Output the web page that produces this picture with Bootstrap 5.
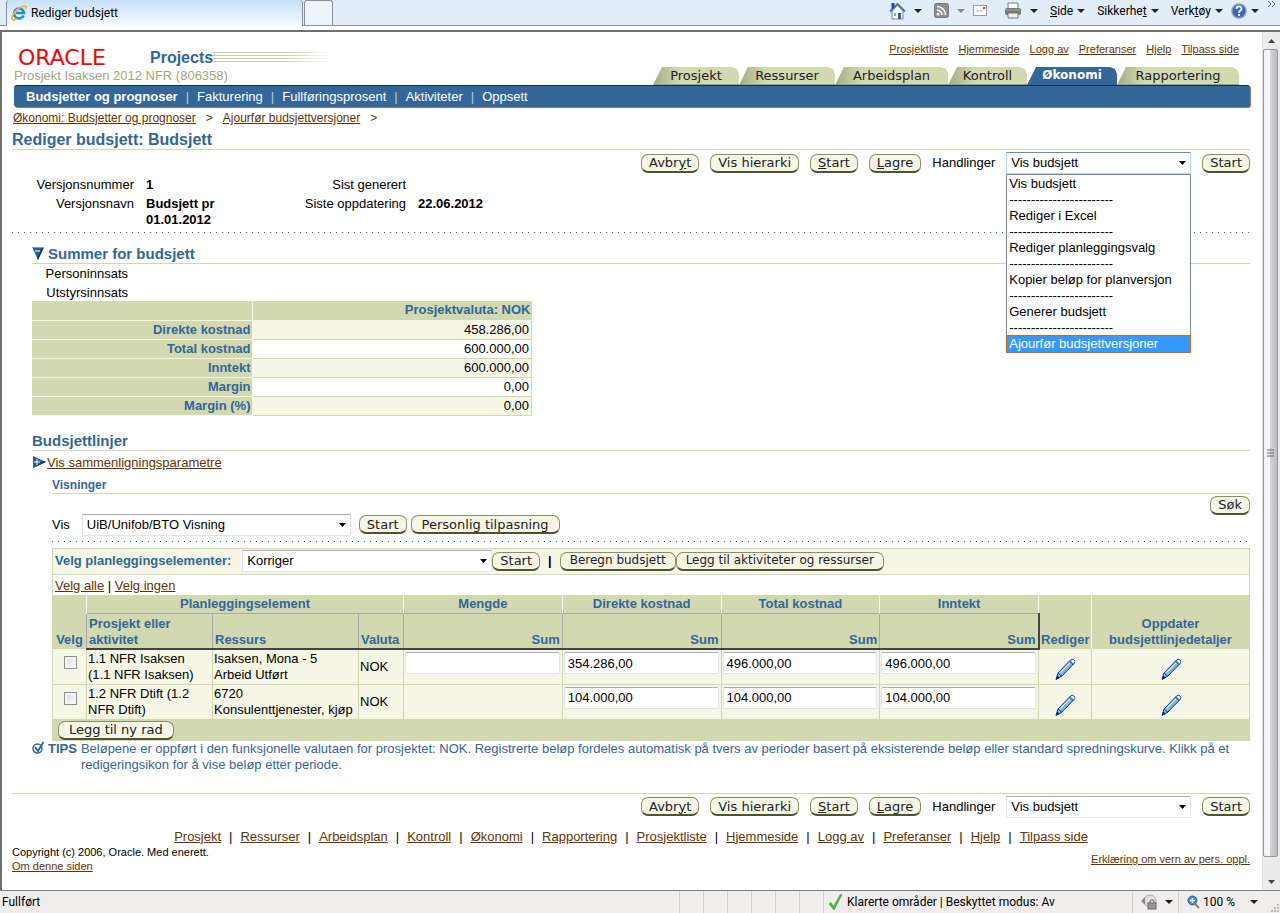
<!DOCTYPE html>
<html lang="no">
<head>
<meta charset="utf-8">
<meta name="viewport" content="width=device-width, initial-scale=1">
<title>Rediger budsjett</title>
<link href="https://cdn.jsdelivr.net/npm/bootstrap@5.3.0/dist/css/bootstrap.min.css" rel="stylesheet">
<style>
:root{--navy:#336699;--khaki:#d2d8b0;--cream:#f5f6e6;--brown:#663300}
body{font:13px/16px "Liberation Sans",Arial,sans-serif;color:#000;background:#fff;min-height:100vh}
a{color:var(--brown);text-decoration:underline}
a:hover{color:#000}
svg{display:block;flex:none}
.chrome{font:12px/16px Roboto,"Open Sans",sans-serif}
/* browser bar */
.topbar{height:26px;background:#e2edfa;border-bottom:1px solid #868f9b}
.pagetab{width:297px;height:26px;margin-left:6px;padding:0 0 0 4px;border:1px solid #868f9b;border-width:0 1px;border-radius:3px 3px 0 0;background:linear-gradient(#c8e0fb,#f6faff)}
.newtab{width:29px;height:25px;margin-left:1px;border:1px solid #868f9b;border-bottom:0;border-radius:3px 3px 0 0;background:#eef4fc}
.tools a{color:#000;text-decoration:none}
.caret{width:0;height:0;border:4px solid transparent;border-top:4px solid #222;border-bottom:0;flex:none}
.caret.dim{border-top-color:#888}
.view{margin-top:4px;border-top:2px solid #707070;border-left:2px solid #707070}
.page{padding:0 12px 0 10px}
.scroller{flex:none;width:18px;background:#ececec;border-left:1px solid #e0e0e0}
.thumb{border:1px solid #979797;border-radius:2px;background:linear-gradient(90deg,#f5f5f5 45%,#d2d2d6 50%,#bcbcc2);margin:0 2px 0 0}
.arrowbox{height:17px}
/* status bar */
.statusbar{height:23px;border-top:1px solid #808080;background:#f0edec}
.statusbar > *{border-left:1px solid #d4d0ce}
.statusbar > .state{border-left:0;padding-left:2px}
.cell{width:24px}
.zone{width:309px}
.lockcell{width:46px}
.zoomcell{width:102px}
/* application header */
.masthead{height:53px}
.oracle{font:22px/20px "DejaVu Sans",sans-serif;color:#f00;width:128px;margin-left:6px}
.product{font-size:16px;font-weight:700;color:var(--navy);line-height:20px}
.stripes{width:119px;height:12px;background:repeating-linear-gradient(#c9cfa0 0 1px,#fff 1px 3px);-webkit-mask-image:linear-gradient(90deg,#000 60%,transparent);mask-image:linear-gradient(90deg,#000 60%,transparent)}
.project{color:#a3a67d;margin-left:2px}
.globals{font-size:11px;line-height:14px;gap:10px;margin:10px 11px 0 0}
.tabs{display:grid;grid-template-columns:86px 96px 113px 79px 90px 122px;margin-right:11px;font:13px/17px "DejaVu Sans",sans-serif}
.tabs a{color:#222;text-decoration:none;text-align:center;height:18px;background:linear-gradient(90deg,#a5ac80,var(--khaki) 26px);border-bottom:1px solid #9a9f72;clip-path:polygon(9px 0,calc(100% - 7px) 0,calc(100% - 2px) 2px,100% 7px,100% 100%,0 100%)}
.tabs a.on{background:var(--navy);border-color:var(--navy);color:#fff;font-weight:700;font-size:12px}
.subnav{height:22px;background:var(--navy);border-top:1px solid #003366;border-radius:3px;box-shadow:1px 1px 1px #777;color:#b9cbe0;margin-left:2px;padding-left:12px}
.subnav a{color:#fff;text-decoration:none}
.crumbs{font-size:12px;gap:10px;margin-top:3px;margin-left:1px;color:var(--brown)}
h1,h2,h3{color:var(--navy);font-weight:700;margin:0;border-bottom:1px solid var(--khaki)}
h1{font-size:16px;line-height:19px;margin-top:4px}
h2{font-size:15px;line-height:19px}
h2.first{margin-top:11px}
h3{font-size:12px;line-height:15px;margin-top:7px}
.obtn{font:13px/15px "DejaVu Sans",sans-serif;color:#222;background:var(--cream);border:1px solid #8a8f63;border-width:1px 1px 2px;border-bottom-color:#4e5430;border-radius:7px;height:19px;padding:0 7px;white-space:nowrap}
.obtn.tight{font-size:12px;padding:0 9px}
.obtn.wide{padding:0 10px}
.actions{height:22px;margin-top:2px;gap:11px}
.osel{appearance:none;font:13px/18px "Liberation Sans",Arial,sans-serif;height:22px;border:1px solid #e2e3ea;border-top-color:#abadb3;border-radius:1px;padding:0 20px 0 4px;color:#000;background:#fff url("data:image/svg+xml,%3Csvg xmlns='http://www.w3.org/2000/svg' width='7' height='4'%3E%3Cpath d='M0 0h7L3.500 4z'/%3E%3C/svg%3E") no-repeat right 4px center}
.osel.open{border-color:#5794bf #b7d9ed #b7d9ed}
.w-act{width:185px}.w-view{width:269px}.w-pick{width:250px}
.droplist{position:absolute;top:100%;left:0;width:100%;z-index:5;background:#fff;border:1px solid #7f8794;padding:1px 0 0}
.droplist div{height:16px;padding-left:2px;white-space:nowrap}
.droplist .hot{background:#3399ff;color:#fff;outline:1px solid #d06a10}
.facts{display:grid;grid-template-columns:122px 88px 160px 1fr;gap:3px 12px;margin:3px 0 4px}
.facts dt{font-weight:400;text-align:right}
.facts dd{font-weight:700;margin:0}
.dots{height:1px;background:repeating-linear-gradient(90deg,var(--navy) 0 1px,#fff 1px 6px)}
.in1{margin-left:20px}.in2{margin-left:40px}
.effort{width:96px;text-align:right;padding-top:2px}
.effort div + div{margin-top:3px}
table{border-collapse:collapse}
.sums{width:500px;margin-bottom:15px}
.sums th,.sums td{height:19px;text-align:right;padding:0 2px}
.sums th{color:var(--navy);background:var(--khaki);border-bottom:1px solid var(--cream);padding:0 1px}
.sums th:first-child{width:220px;border-right:1px solid var(--cream)}
.sums td{border:1px solid var(--khaki)}
.sums tr:nth-child(odd) td{background:var(--cream)}
.viewrow{margin-bottom:5px;margin-top:-1px}
.search{margin-top:2px}
.toolbar{height:27px;margin-top:6px;border:1px solid var(--khaki);background:var(--cream);color:var(--navy);padding-left:2px}
.toolbar label{margin-right:11px}
.picks{height:20px;border:1px solid var(--khaki);border-width:0 1px;padding-left:2px;line-height:22px}
.lines{table-layout:fixed;width:100%;border:1px solid var(--khaki)}
.lines th{background:var(--khaki);color:var(--navy);text-align:center;vertical-align:bottom;padding:0 2px 1px;border-left:1px solid var(--cream)}
.lines th:first-child[rowspan]{border-left-color:var(--khaki)}
.lines .top th{height:18px}
.lines .sub th{height:36px;border-left:1px solid #aaa;border-top:1px solid #aaa;border-bottom:2px solid #444;padding-bottom:0}
.lines .sub th:last-child{border-right:2px solid #444}
.lines td{background:var(--cream);border:1px solid var(--khaki);border-top:0;padding:1px 0 0 1px;height:35px;vertical-align:top;white-space:nowrap}
.lines td.mid{vertical-align:middle;padding-top:0}
.lines tfoot td{background:var(--khaki);height:21px;padding:1px 0 0 5px;border:0}
.c-velg{width:34px}.c-proj{width:126px}.c-res{width:146px}.c-val{width:45px}.c-red{width:53px}.c-opp{width:158px}
.amount{display:block;width:calc(100% - 2px);height:22px;border:1px solid #e2e3ea;border-top-color:#abadb3;border-radius:2px;padding:0 2px 0 3px;margin-top:1px;font:inherit;line-height:18px;background:#fff;color:#000}
.tick{appearance:none;display:block;width:13px;height:13px;border:1px solid #8e8f8f;background:linear-gradient(135deg,#cfd3da,#fff);box-shadow:inset 0 0 0 2px #f4f4f4;margin:6px auto 0}
.tip{color:var(--navy)}
.fine{font-size:11px;line-height:14px}
.endrule{height:1px;margin-top:20px;background:var(--khaki)}
.bottomlinks{margin-top:11px}
</style>
</head>
<body class="d-flex flex-column">
<svg width="0" height="0" class="position-absolute" aria-hidden="true"><defs>
<linearGradient id="pg" x1="0" y1="0" x2="1" y2="1"><stop offset="0" stop-color="#cfe6fb"/><stop offset="1" stop-color="#3f86cf"/></linearGradient>
<g id="pencil"><path d="M3 15 15.500 2q2-1.500 3.500 0t0 3.500L7 18l-6 3.500z" fill="url(#pg)" stroke="#0b3c8c"/><path d="M14.500 3l4 4M3 15l4 3.500" stroke="#0b3c8c" fill="none"/><path d="M16 2.600l2.600 2.600 1-2-2-1.500z" fill="#fff"/><path d="M1 21.500l1-4 3 2.500z" fill="#06286b"/><path d="M5.500 14.500 15 5" stroke="#fff" fill="none"/></g>
</defs></svg>

<header class="topbar chrome d-flex">
  <div class="pagetab d-flex align-items-center gap-1">
    <svg width="16" height="16" viewBox="0 0 16 16"><path d="M12.600 10.500A5 5 0 1 1 13 8H5" fill="none" stroke="#1d8be0" stroke-width="2.600"/><path d="M1.500 14.500C-1 11 7 2 13 1c3 0 2 2 1 3M1.500 14.500c1 1 3 0 4.500-1" fill="none" stroke="#f2b91c" stroke-width="1.700"/></svg>
    <span>Rediger budsjett</span>
  </div>
  <div class="newtab"></div>
  <nav class="tools d-flex align-items-center ms-auto pb-1 pe-1" aria-label="Verktøylinje">
    <svg width="17" height="18" viewBox="0 0 17 18"><path d="M3 9v8h11V9L8.500 3z" fill="#f7f9fd" stroke="#6681ad"/><path d="M1 9.500 8.500 2l7.500 7.500" fill="none" stroke="#5473a8" stroke-width="2"/><path d="M2.500 1h3v4l-3 2z" fill="#223fc0"/><path d="M9 11h3v6H9z" fill="#3d5d8c"/><path d="M5 11h2v3H5z" fill="#8aa"/></svg>
    <i class="caret mx-2"></i>
    <svg class="ms-1" width="15" height="15" viewBox="0 0 15 15"><rect x=".5" y=".5" width="14" height="14" rx="2" fill="#8e8e8e" stroke="#777"/><circle cx="4" cy="11" r="1.500" fill="#fff"/><path d="M3 7a5 5 0 0 1 5 5M3 3.500A8.500 8.500 0 0 1 11.500 12" fill="none" stroke="#fff" stroke-width="1.600"/></svg>
    <i class="caret dim mx-2"></i>
    <svg width="15" height="12" viewBox="0 0 15 12"><rect x=".5" y=".5" width="13" height="10" fill="#fff" stroke="#99a"/><path d="M10 2h2v2h-2z" fill="#e33"/><path d="M3 6h6" stroke="#aab"/></svg>
    <svg class="ms-3 me-2" width="18" height="17" viewBox="0 0 18 17"><path d="M4 1h10v6H4z" fill="#fff" stroke="#777"/><rect x="1" y="6" width="16" height="7" rx="2" fill="#77797d"/><path d="M4 11h10v5H4z" fill="#eee" stroke="#777"/><path d="M2 8h14" stroke="#aaa"/></svg>
    <i class="caret me-2"></i>
    <a href="#" class="ms-1"><u>S</u>ide</a><i class="caret mx-1"></i>
    <a href="#" class="ms-2">Sikkerhe<u>t</u></a><i class="caret mx-1"></i>
    <a href="#" class="ms-2">Verk<u>t</u>øy</a><i class="caret ms-1 me-2"></i>
    <svg width="16" height="16" viewBox="0 0 16 16"><circle cx="8" cy="8" r="7" fill="#3668bd" stroke="#8799b8" stroke-width="1.500"/><path d="M5.500 6c0-3.500 5-3.500 5-.3C10.500 7.500 8 7.500 8 9.800M8 11v2" fill="none" stroke="#fff" stroke-width="1.800"/></svg>
    <i class="caret me-2 ms-1"></i>
    <svg class="align-self-start" width="9" height="8" viewBox="0 0 9 8"><path d="M1 1l3 3-3 3M5 1l3 3-3 3" fill="none" stroke="#557"/></svg>
  </nav>
</header>

<div class="view d-flex flex-grow-1">
<main class="page flex-grow-1">
  <header class="masthead d-flex justify-content-between">
    <div>
      <div class="d-flex align-items-center pt-3">
        <span class="oracle">ORACLE</span>
        <span class="product ms-1">Projects</span>
        <span class="stripes"></span>
      </div>
      <div class="project">Prosjekt Isaksen 2012 NFR (806358)</div>
    </div>
    <div class="d-flex flex-column justify-content-between">
      <nav class="globals d-flex justify-content-end" aria-label="Globale lenker"><a href="#">Prosjektliste</a><a href="#">Hjemmeside</a><a href="#">Logg av</a><a href="#">Preferanser</a><a href="#">Hjelp</a><a href="#">Tilpass side</a></nav>
      <nav class="tabs" aria-label="Faner"><a href="#">Prosjekt</a><a href="#">Ressurser</a><a href="#">Arbeidsplan</a><a href="#">Kontroll</a><a href="#" class="on">Økonomi</a><a href="#">Rapportering</a></nav>
    </div>
  </header>
  <nav class="subnav d-flex align-items-center gap-2" aria-label="Undermeny"><a href="#" class="fw-bold">Budsjetter og prognoser</a>|<a href="#">Fakturering</a>|<a href="#">Fullføringsprosent</a>|<a href="#">Aktiviteter</a>|<a href="#">Oppsett</a></nav>
  <nav class="crumbs d-flex" aria-label="Sti"><a href="#">Økonomi: Budsjetter og prognoser</a>&gt;<a href="#">Ajourfør budsjettversjoner</a>&gt;</nav>

  <h1>Rediger budsjett: Budsjett</h1>
  <div class="actions d-flex align-items-center justify-content-end">
    <button type="button" class="obtn">Avbr<u>y</u>t</button>
    <button type="button" class="obtn">Vis hierarki</button>
    <button type="button" class="obtn"><u>S</u>tart</button>
    <button type="button" class="obtn"><u>L</u>agre</button>
    <label for="act1">Handlinger</label>
    <div class="position-relative d-flex">
      <select id="act1" class="osel open w-act"><option>Vis budsjett</option></select>
      <div class="droplist" role="listbox" aria-label="Handlinger">
        <div role="option">Vis budsjett</div><div>------------------------</div>
        <div role="option">Rediger i Excel</div><div>------------------------</div>
        <div role="option">Rediger planleggingsvalg</div><div>------------------------</div>
        <div role="option">Kopier beløp for planversjon</div><div>------------------------</div>
        <div role="option">Generer budsjett</div><div>------------------------</div>
        <div role="option" class="hot">Ajourfør budsjettversjoner</div>
      </div>
    </div>
    <button type="button" class="obtn">Start</button>
  </div>

  <dl class="facts">
    <dt>Versjonsnummer</dt><dd>1</dd><dt>Sist generert</dt><dd></dd>
    <dt>Versjonsnavn</dt><dd>Budsjett pr 01.01.2012</dd><dt>Siste oppdatering</dt><dd>22.06.2012</dd>
  </dl>
  <div class="dots"></div>

  <section class="in1">
    <h2 class="first d-flex align-items-center gap-1"><svg width="12" height="15" viewBox="0 0 12 15"><path d="M0 1h12L6 14z" fill="#2c5f96"/><path d="M12 1 6 14l-1-2 5-10z" fill="#123a68"/><path d="M0 1h12v1H1z" fill="#6da0d4"/><path d="M3 5h5" stroke="#fff"/></svg>Summer for budsjett</h2>
    <div class="effort"><div>Personinnsats</div><div>Utstyrsinnsats</div></div>
    <table class="sums">
      <thead><tr><th></th><th scope="col">Prosjektvaluta: NOK</th></tr></thead>
      <tbody>
      <tr><th scope="row">Direkte kostnad</th><td>458.286,00</td></tr>
      <tr><th scope="row">Total kostnad</th><td>600.000,00</td></tr>
      <tr><th scope="row">Inntekt</th><td>600.000,00</td></tr>
      <tr><th scope="row">Margin</th><td>0,00</td></tr>
      <tr><th scope="row">Margin (%)</th><td>0,00</td></tr>
      </tbody>
    </table>
    <h2>Budsjettlinjer</h2>
    <div class="d-flex align-items-center mt-1"><svg width="15" height="13" viewBox="0 0 15 13"><path d="M1 0l13 6L1 12z" fill="#2c5f96"/><path d="M1 12l13-6-2-1-8 5z" fill="#123a68"/><path d="M5 3v6M2 6h6" stroke="#fff"/></svg><a href="#">Vis sammenligningsparametre</a></div>
  </section>

  <section class="in2">
    <h3>Visninger</h3>
    <div class="search d-flex justify-content-end"><button type="button" class="obtn">Søk</button></div>
    <div class="viewrow d-flex align-items-center"><label for="view" class="me-2 pe-1">Vis</label>
      <select id="view" class="osel w-view me-1"><option>UiB/Unifob/BTO Visning</option></select>
      <button type="button" class="obtn ms-1">Start</button><button type="button" class="obtn wide ms-1">Personlig tilpasning</button></div>
    <div class="dots"></div>
    <div class="toolbar d-flex align-items-center"><label for="pick" class="fw-bold">Velg planleggingselementer:</label>
      <select id="pick" class="osel w-pick"><option>Korriger</option></select>
      <button type="button" class="obtn">Start</button><b class="text-black mx-2">|</b>
      <button type="button" class="obtn tight">Beregn budsjett</button><button type="button" class="obtn tight">Legg til aktiviteter og ressurser</button></div>
    <div class="picks"><a href="#">Velg alle</a> | <a href="#">Velg ingen</a></div>
    <table class="lines">
      <colgroup><col class="c-velg"><col class="c-proj"><col class="c-res"><col class="c-val"><col><col><col><col><col class="c-red"><col class="c-opp"></colgroup>
      <thead>
      <tr class="top"><th rowspan="2" class="px-0">Velg</th><th colspan="3">Planleggingselement</th><th>Mengde</th><th>Direkte kostnad</th><th>Total kostnad</th><th>Inntekt</th><th rowspan="2" class="px-0">Rediger</th><th rowspan="2">Oppdater budsjettlinjedetaljer</th></tr>
      <tr class="sub"><th class="text-start">Prosjekt eller aktivitet</th><th class="text-start">Ressurs</th><th class="text-start">Valuta</th><th class="text-end">Sum</th><th class="text-end">Sum</th><th class="text-end">Sum</th><th class="text-end">Sum</th></tr>
      </thead>
      <tbody>
      <tr><td><input type="checkbox" class="tick" aria-label="Velg rad 1"></td><td>1.1 NFR Isaksen<br>(1.1 NFR Isaksen)</td><td>Isaksen, Mona - 5<br>Arbeid Utført</td><td class="mid">NOK</td>
        <td><input class="amount" type="text" aria-label="Mengde rad 1"></td><td><input class="amount" type="text" value="354.286,00" aria-label="Direkte kostnad rad 1"></td><td><input class="amount" type="text" value="496.000,00" aria-label="Total kostnad rad 1"></td><td><input class="amount" type="text" value="496.000,00" aria-label="Inntekt rad 1"></td>
        <td><a href="#" aria-label="Rediger rad 1"><svg class="mx-auto mt-2" width="21" height="22" viewBox="0 0 21 22"><use href="#pencil"/></svg></a></td><td><a href="#" aria-label="Oppdater rad 1"><svg class="mx-auto mt-2" width="21" height="22" viewBox="0 0 21 22"><use href="#pencil"/></svg></a></td></tr>
      <tr><td><input type="checkbox" class="tick" aria-label="Velg rad 2"></td><td>1.2 NFR Dtift (1.2<br>NFR Dtift)</td><td>6720<br>Konsulenttjenester, kjøp</td><td class="mid">NOK</td>
        <td></td><td><input class="amount" type="text" value="104.000,00" aria-label="Direkte kostnad rad 2"></td><td><input class="amount" type="text" value="104.000,00" aria-label="Total kostnad rad 2"></td><td><input class="amount" type="text" value="104.000,00" aria-label="Inntekt rad 2"></td>
        <td><a href="#" aria-label="Rediger rad 2"><svg class="mx-auto mt-2" width="21" height="22" viewBox="0 0 21 22"><use href="#pencil"/></svg></a></td><td><a href="#" aria-label="Oppdater rad 2"><svg class="mx-auto mt-2" width="21" height="22" viewBox="0 0 21 22"><use href="#pencil"/></svg></a></td></tr>
      </tbody>
      <tfoot><tr><td colspan="10"><button type="button" class="obtn wide d-block">Legg til ny rad</button></td></tr></tfoot>
    </table>
  </section>

  <div class="tip in1 d-flex">
    <svg class="me-1" width="12" height="13" viewBox="0 0 12 13"><circle cx="5.500" cy="7.500" r="4.500" fill="#fff" stroke="#336699" stroke-width="1.500"/><path d="M3 6l3 4 5.500-9" fill="none" stroke="#336699" stroke-width="2"/></svg>
    <b class="me-1">TIPS</b><span>Beløpene er oppført i den funksjonelle valutaen for prosjektet: NOK. Registrerte beløp fordeles automatisk på tvers av perioder basert på eksisterende beløp eller standard spredningskurve. Klikk på et redigeringsikon for å vise beløp etter periode.</span>
  </div>

  <footer>
    <div class="endrule"></div>
    <div class="actions d-flex align-items-center justify-content-end">
      <button type="button" class="obtn">Avbr<u>y</u>t</button>
      <button type="button" class="obtn">Vis hierarki</button>
      <button type="button" class="obtn"><u>S</u>tart</button>
      <button type="button" class="obtn"><u>L</u>agre</button>
      <label for="act2">Handlinger</label>
      <select id="act2" class="osel w-act"><option>Vis budsjett</option></select>
      <button type="button" class="obtn">Start</button>
    </div>
    <nav class="bottomlinks d-flex justify-content-center gap-2" aria-label="Bunnlenker"><a href="#">Prosjekt</a>|<a href="#">Ressurser</a>|<a href="#">Arbeidsplan</a>|<a href="#">Kontroll</a>|<a href="#">Økonomi</a>|<a href="#">Rapportering</a>|<a href="#">Prosjektliste</a>|<a href="#">Hjemmeside</a>|<a href="#">Logg av</a>|<a href="#">Preferanser</a>|<a href="#">Hjelp</a>|<a href="#">Tilpass side</a></nav>
    <div class="fine d-flex justify-content-between align-items-center"><div>Copyright (c) 2006, Oracle. Med enerett.<br><a href="#">Om denne siden</a></div><a href="#">Erklæring om vern av pers. oppl.</a></div>
  </footer>
</main>
<aside class="scroller d-flex flex-column" aria-hidden="true">
  <div class="arrowbox d-flex align-items-center justify-content-center"><svg width="7" height="4" viewBox="0 0 7 4"><path d="M0 4h7L3.500 0z" fill="#444"/></svg></div>
  <div class="thumb flex-grow-1 d-flex align-items-center justify-content-center"><svg width="7" height="8" viewBox="0 0 7 8"><path d="M0 1h7M0 4h7M0 7h7" stroke="#666"/></svg></div>
  <div class="arrowbox mt-3 d-flex align-items-center justify-content-center"><svg width="7" height="4" viewBox="0 0 7 4"><path d="M0 0h7L3.500 4z" fill="#444"/></svg></div>
</aside>
</div>

<footer class="statusbar chrome d-flex align-items-stretch">
  <span class="state flex-grow-1 align-self-center">Fullført</span>
  <i class="cell"></i><i class="cell"></i><i class="cell"></i><i class="cell"></i><i class="cell"></i><i class="cell"></i>
  <span class="zone d-flex align-items-center gap-1 ps-1"><svg width="15" height="17" viewBox="0 0 15 17"><path d="M1 10l2-1.500 2.500 4L12 1l2-.5L6 16z" fill="#43c03a" stroke="#2c9a2c" stroke-width=".6"/></svg>Klarerte områder | Beskyttet modus: Av</span>
  <span class="lockcell d-flex align-items-center gap-2 ps-2"><svg width="16" height="16" viewBox="0 0 16 16"><circle cx="9" cy="7" r="6" fill="#ddd" stroke="#aaa"/><path d="M0 7l4-4v8z" fill="#888"/><rect x="7" y="9" width="8" height="6" fill="#999" stroke="#666"/><path d="M9 9V7q2-3 4 0v2" fill="none" stroke="#666"/></svg><i class="caret"></i></span>
  <span class="zoomcell d-flex align-items-center ps-2"><svg width="13" height="14" viewBox="0 0 13 14"><path d="M8 9l4 4" stroke="#a77b3c" stroke-width="2"/><circle cx="5.500" cy="5.500" r="4.500" fill="#3d8fe0" stroke="#2a62a8"/><path d="M5.500 3v5M3 5.500h5" stroke="#fff" stroke-width="1.500"/></svg>&nbsp;100 %<i class="caret ms-auto me-2"></i><svg class="align-self-end ms-1" width="10" height="10" viewBox="0 0 10 10"><path d="M7 1h2v2H7zM4 4h2v2H4zM7 4h2v2H7zM1 7h2v2H1zM4 7h2v2H4zM7 7h2v2H7z" fill="#bbb"/></svg></span>
</footer>
<script src="https://cdn.jsdelivr.net/npm/bootstrap@5.3.0/dist/js/bootstrap.bundle.min.js"></script>
</body>
</html>
